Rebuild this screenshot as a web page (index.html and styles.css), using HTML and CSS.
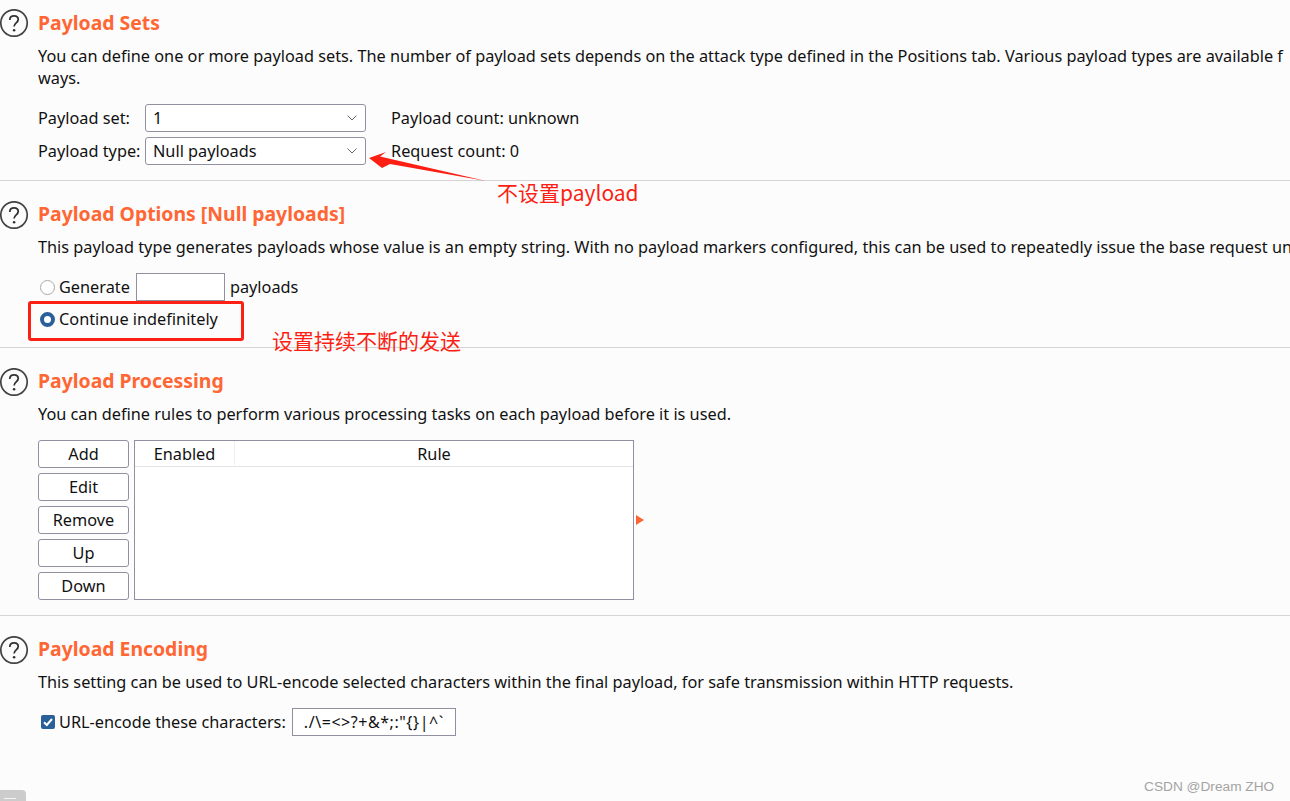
FILE: index.html
```html
<!DOCTYPE html>
<html lang="en">
<head>
<meta charset="utf-8">
<title>Payload settings</title>
<link rel="stylesheet" href="styles.css">
</head>
<body>
<main class="page">
  <section class="section s1">
    <svg class="help" viewBox="0 0 28 28"><circle cx="14" cy="14" r="13.200" fill="none" stroke="#444" stroke-width="1.7"/><path d="M9.8 11c0-2.6 1.9-4.2 4.3-4.2s4.1 1.5 4.1 3.7c0 3.300-4.100 3.500-4.100 7" fill="none" stroke="#333" stroke-width="1.800"/><circle cx="14.100" cy="21.200" r="1.300" fill="#333"/></svg>
    <div class="body">
      <h2 class="title">Payload Sets</h2>
      <p class="desc">You can define one or more payload sets. The number of payload sets depends on the attack type defined in the Positions tab. Various payload types are available f<br>ways.</p>
      <div class="form-row first-row">
        <span class="label">Payload set:</span>
        <div class="select"><span>1</span><svg class="chev" viewBox="0 0 10 6"><path d="M.5.5 5 5 9.500.5" fill="none" stroke="#666" stroke-width="1"/></svg></div>
        <span class="info">Payload count: unknown</span>
      </div>
      <div class="form-row second-row">
        <span class="label">Payload type:</span>
        <div class="select"><span>Null payloads</span><svg class="chev" viewBox="0 0 10 6"><path d="M.5.5 5 5 9.500.5" fill="none" stroke="#666" stroke-width="1"/></svg></div>
        <span class="info">Request count: 0</span>
      </div>
    </div>
  </section>

  <section class="section s2">
    <svg class="help" viewBox="0 0 28 28"><circle cx="14" cy="14" r="13.200" fill="none" stroke="#444" stroke-width="1.7"/><path d="M9.8 11c0-2.6 1.9-4.2 4.3-4.2s4.1 1.5 4.1 3.7c0 3.300-4.100 3.500-4.100 7" fill="none" stroke="#333" stroke-width="1.800"/><circle cx="14.100" cy="21.200" r="1.300" fill="#333"/></svg>
    <div class="body">
      <h2 class="title">Payload Options [Null payloads]</h2>
      <p class="desc">This payload type generates payloads whose value is an empty string. With no payload markers configured, this can be used to repeatedly issue the base request un</p>
      <div class="gen-row">
        <span class="radio"></span><span class="opt">Generate</span>
        <span class="gen-input"></span><span>payloads</span>
      </div>
      <div class="cont-row">
        <span class="radio on"></span><span class="opt">Continue indefinitely</span>
      </div>
    </div>
  </section>

  <section class="section s3">
    <svg class="help" viewBox="0 0 28 28"><circle cx="14" cy="14" r="13.200" fill="none" stroke="#444" stroke-width="1.7"/><path d="M9.8 11c0-2.6 1.9-4.2 4.3-4.2s4.1 1.5 4.1 3.7c0 3.300-4.100 3.500-4.100 7" fill="none" stroke="#333" stroke-width="1.800"/><circle cx="14.100" cy="21.200" r="1.300" fill="#333"/></svg>
    <div class="body">
      <h2 class="title">Payload Processing</h2>
      <p class="desc">You can define rules to perform various processing tasks on each payload before it is used.</p>
      <div class="rules">
        <div class="buttons">
          <button class="btn">Add</button>
          <button class="btn">Edit</button>
          <button class="btn">Remove</button>
          <button class="btn">Up</button>
          <button class="btn">Down</button>
        </div>
        <div class="table">
          <div class="thead"><span class="col-enabled">Enabled</span><span class="col-rule">Rule</span></div>
        </div>
        <span class="expander"></span>
      </div>
    </div>
  </section>

  <section class="section s4">
    <svg class="help" viewBox="0 0 28 28"><circle cx="14" cy="14" r="13.200" fill="none" stroke="#444" stroke-width="1.7"/><path d="M9.8 11c0-2.6 1.9-4.2 4.3-4.2s4.1 1.5 4.1 3.7c0 3.300-4.100 3.500-4.100 7" fill="none" stroke="#333" stroke-width="1.800"/><circle cx="14.100" cy="21.200" r="1.300" fill="#333"/></svg>
    <div class="body">
      <h2 class="title">Payload Encoding</h2>
      <p class="desc">This setting can be used to URL-encode selected characters within the final payload, for safe transmission within HTTP requests.</p>
      <div class="enc-row">
        <span class="check"><svg viewBox="0 0 14 14"><path d="M3 7.200 5.800 10 11 4" fill="none" stroke="#fff" stroke-width="2"/></svg></span>
        <span class="opt">URL-encode these characters:</span>
        <span class="chars">./\=&lt;&gt;?+&amp;*;:"{}|^`</span>
      </div>
    </div>
  </section>
</main>

<svg class="arrow" viewBox="0 0 125 36"><polygon points="1,8 18,2 12,6.500 118,31 22,14 14,18" fill="#fb1f14"/></svg>
<span class="note note-payload">不设置payload</span>
<div class="red-box"></div>
<span class="note note-send">设置持续不断的发送</span>
<div class="corner-tab"></div>
<span class="watermark">CSDN @Dream ZHO</span>
</body>
</html>
```
FILE: styles.css
```css
* { box-sizing: border-box; }
html, body { margin: 0; height: 801px; overflow: hidden; }
body {
  position: relative;
  background: #fcfcfc;
  color: #111;
  font: 16.3px/22px "Noto Sans", "Noto Sans CJK SC", sans-serif;
}
.page { width: 1290px; }
.section {
  display: flex;
  gap: 10px;
  border-bottom: 1px solid #d4d4d4;
}
.s1 { height: 181px; padding-top: 9px; }
.s2 { height: 167px; padding-top: 20px; }
.s3 { height: 268px; padding-top: 20px; }
.s4 { height: 185px; padding-top: 20px; border-bottom: 0; }
.help { width: 28px; height: 28px; flex: none; }
.s1 .body { padding-top: 1px; }
.body { flex: 1; min-width: 0; }
.title {
  margin: 0;
  height: 26px;
  color: #ff6633;
  font-size: 19.4px;
  font-weight: 700;
  line-height: 26px;
}
.desc { margin: 9px 0 0; width: 1252px; overflow: hidden; white-space: nowrap; }
.form-row { display: flex; align-items: center; height: 28px; }
.first-row { margin-top: 15px; }
.second-row { margin-top: 5px; }
.label { width: 107px; flex: none; }
.select {
  display: flex;
  align-items: center;
  justify-content: space-between;
  width: 221px;
  height: 28px;
  padding: 0 8px 0 7px;
  background: #fff;
  border: 1px solid #9290a0;
  border-radius: 3px;
}
.chev { width: 10px; height: 6px; }
.info { margin-left: 25px; }
.gen-row { display: flex; align-items: center; height: 28px; margin-top: 15px; }
.cont-row { display: flex; align-items: center; height: 28px; margin-top: 4px; }
.radio {
  width: 15px;
  height: 15px;
  margin: 0 4px 0 2px;
  background: #fff;
  border: 1px solid #aaa;
  border-radius: 50%;
  flex: none;
}
.radio.on { border: 4px solid #2a6099; }
.opt { flex: none; }
.gen-input {
  width: 89px;
  height: 28px;
  margin: 0 5px 0 6px;
  background: #fff;
  border: 1px solid #9290a0;
}
.rules { position: relative; display: flex; gap: 5px; margin-top: 15px; }
.buttons { display: flex; flex-direction: column; gap: 5px; width: 91px; }
.btn {
  height: 28px;
  padding: 0;
  background: #fff;
  border: 1px solid #9290a0;
  border-radius: 3px;
  color: #111;
  font: inherit;
}
.table { width: 500px; height: 160px; background: #fff; border: 1px solid #9290a0; }
.thead { display: flex; height: 26px; border-bottom: 1px solid #e4e4e4; text-align: center; line-height: 26px; }
.col-enabled { width: 100px; height: 24px; border-right: 1px solid #eee; }
.col-rule { flex: 1; }
.expander {
  position: absolute;
  left: 598px;
  top: 75px;
  border-left: 8px solid #ff6633;
  border-top: 5px solid transparent;
  border-bottom: 5px solid transparent;
}
.enc-row { display: flex; align-items: center; height: 28px; margin-top: 15px; }
.check {
  display: flex;
  width: 14px;
  height: 14px;
  margin: 0 4px 0 3px;
  background: #2a6099;
  border-radius: 2px;
  flex: none;
}
.chars {
  width: 164px;
  height: 28px;
  margin-left: 6px;
  background: #fff;
  border: 1px solid #9290a0;
  text-align: center;
  font-size: 16px;
  letter-spacing: 0.55px;
  line-height: 26px;
}
.arrow { position: absolute; left: 368px; top: 150px; width: 125px; height: 36px; }
.note { position: absolute; color: #fb1f14; font-size: 21px; line-height: 28px; white-space: nowrap; font-family: "Noto Sans CJK SC", sans-serif; }
.note-payload { left: 497px; top: 178px; }
.note-send { left: 272px; top: 326px; }
.red-box {
  position: absolute;
  left: 28px;
  top: 301px;
  width: 216px;
  height: 40px;
  border: 3px solid #fb1f14;
  border-radius: 3px;
}
.corner-tab { position: absolute; left: 0; top: 790px; width: 26px; height: 11px; background: #ccc; border-radius: 0 4px 0 0; }
.corner-tab::after { content: ""; position: absolute; left: 4px; top: 8px; width: 12px; height: 1px; background: #f4f4f4; }
.watermark { position: absolute; left: 1144px; top: 778px; color: #a3a3a3; font: 13.7px/18px "Liberation Sans", sans-serif; }
```
